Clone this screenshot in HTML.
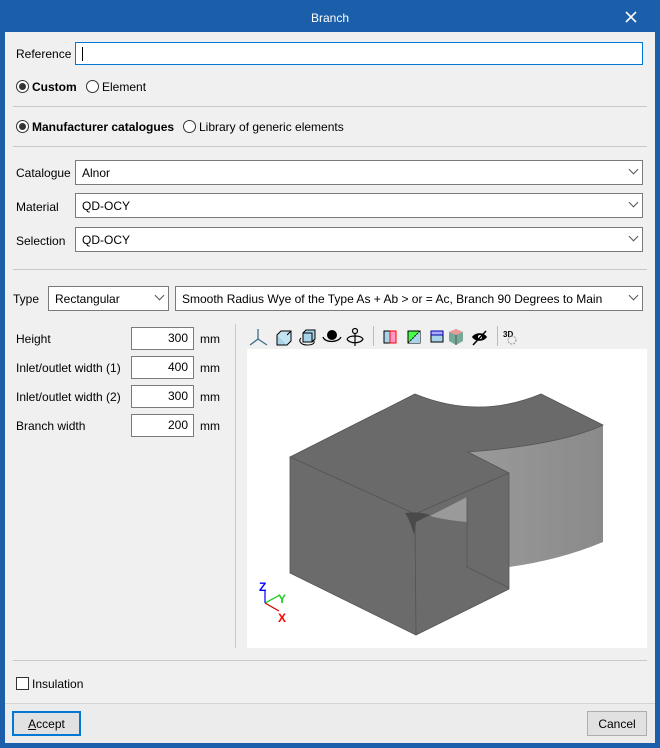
<!DOCTYPE html>
<html><head><style>
*{box-sizing:border-box;margin:0;padding:0}
body{width:660px;height:748px;background:#1b5ea9;font-family:"Liberation Sans",sans-serif;font-size:12px;color:#000;position:relative;overflow:hidden}
.a{position:absolute}
#c{left:5px;top:32px;width:650px;height:711px;background:#f0f0f0}
.t{position:absolute;white-space:nowrap;line-height:14px}
.inp{position:absolute;background:#fff;border:1px solid #7a7a7a}
.sep{position:absolute;height:1px;background:#c8c8c8;left:13px;width:634px}
.rad{position:absolute;width:13px;height:13px;border:1px solid #333;border-radius:50%;background:#fff}
.rad.on::after{content:"";position:absolute;left:2px;top:2px;width:7px;height:7px;border-radius:50%;background:#333}
.chev{position:absolute;right:5px;top:5px;width:7px;height:7px;border-right:1px solid #555;border-bottom:1px solid #555;transform:rotate(45deg)}
.num{text-align:right;padding-right:5px;line-height:21px}
</style></head><body>
<div class="t" style="left:0;width:660px;top:11px;text-align:center;color:#fff;font-size:12px">Branch</div>
<svg class="a" style="left:625px;top:11px" width="12" height="12"><path d="M1 1L11 11M11 1L1 11" stroke="#fff" stroke-width="1.6"/></svg>
<div id="c" class="a"></div>

<div class="t" style="left:16px;top:47px">Reference</div>
<div class="inp" style="left:75px;top:42px;width:568px;height:23px;border:1px solid #0078d7"><div class="a" style="left:6px;top:4px;width:1px;height:14px;background:#000"></div></div>

<div class="rad on" style="left:16px;top:80px"></div><div class="t" style="left:32px;top:80px;font-weight:bold">Custom</div>
<div class="rad" style="left:86px;top:80px"></div><div class="t" style="left:102px;top:80px">Element</div>
<div class="sep" style="top:106px"></div>
<div class="rad on" style="left:16px;top:120px"></div><div class="t" style="left:32px;top:120px;font-weight:bold">Manufacturer catalogues</div>
<div class="rad" style="left:183px;top:120px"></div><div class="t" style="left:199px;top:120px">Library of generic elements</div>
<div class="sep" style="top:146px"></div>

<div class="t" style="left:16px;top:166px">Catalogue</div>
<div class="inp" style="left:75px;top:160px;width:568px;height:25px"><div class="t" style="left:6px;top:5px">Alnor</div><div class="chev"></div></div>
<div class="t" style="left:16px;top:200px">Material</div>
<div class="inp" style="left:75px;top:193px;width:568px;height:25px"><div class="t" style="left:6px;top:5px">QD-OCY</div><div class="chev"></div></div>
<div class="t" style="left:16px;top:234px">Selection</div>
<div class="inp" style="left:75px;top:227px;width:568px;height:25px"><div class="t" style="left:6px;top:5px">QD-OCY</div><div class="chev"></div></div>
<div class="sep" style="top:269px"></div>

<div class="t" style="left:13px;top:292px">Type</div>
<div class="inp" style="left:48px;top:286px;width:121px;height:25px"><div class="t" style="left:6px;top:5px">Rectangular</div><div class="chev"></div></div>
<div class="inp" style="left:175px;top:286px;width:468px;height:25px"><div class="t" style="left:6px;top:5px">Smooth Radius Wye of the Type As + Ab &gt; or = Ac, Branch 90 Degrees to Main</div><div class="chev"></div></div>

<div class="t" style="left:16px;top:332px">Height</div>
<div class="inp num" style="left:131px;top:327px;width:63px;height:23px">300</div><div class="t" style="left:200px;top:332px">mm</div>
<div class="t" style="left:16px;top:361px">Inlet/outlet width (1)</div>
<div class="inp num" style="left:131px;top:356px;width:63px;height:23px">400</div><div class="t" style="left:200px;top:361px">mm</div>
<div class="t" style="left:16px;top:390px">Inlet/outlet width (2)</div>
<div class="inp num" style="left:131px;top:385px;width:63px;height:23px">300</div><div class="t" style="left:200px;top:390px">mm</div>
<div class="t" style="left:16px;top:419px">Branch width</div>
<div class="inp num" style="left:131px;top:414px;width:63px;height:23px">200</div><div class="t" style="left:200px;top:419px">mm</div>

<div class="a" style="left:235px;top:324px;width:1px;height:324px;background:#c8c8c8"></div>

<svg class="a" style="left:245px;top:324px" width="280" height="25">
<g stroke="#3d6f8a" stroke-width="1.3" fill="none"><path d="M13 5V15L5 21M13 15L22 21"/></g>
<g stroke="#000" fill="#a8d4ea"><path d="M32 11h10v10h-10z"/><path d="M32 11l4-4h10v10l-4 4M42 11l4-4" fill="#c5e4f2"/></g>
<g stroke="#000" fill="#a8d4ea"><path d="M58 9h9v9h-9z M58 9l3-3h9v9l-3 3"/><path d="M56 14c-3 3 0 7 6 7s9-2 6-5" fill="none"/></g>
<g><circle cx="87" cy="11" r="5" fill="#000"/><path d="M78 13c2 6 15 6 18 0" stroke="#000" fill="none" stroke-width="1.3"/></g>
<g stroke="#000" fill="none" stroke-width="1.2"><circle cx="110" cy="7" r="2.5"/><path d="M110 10v12M102 15c2 5 14 5 16 0c-2-4-14-4-16 0"/></g>
<rect x="128" y="2" width="1" height="20" fill="#bbb"/>
<g><rect x="139" y="7" width="12" height="12" fill="#a8d4ea" stroke="#000"/><rect x="145" y="7" width="6" height="12" fill="#f9c" stroke="red"/></g>
<g><rect x="163" y="7" width="12" height="12" fill="#4f4" stroke="#000"/><path d="M163 19L175 7V19z" fill="#a8d4ea"/><path d="M163 19L175 7" stroke="#000" stroke-dasharray="2 1"/></g>
<g><rect x="186" y="7" width="12" height="11" fill="#a8d4ea" stroke="#000"/><rect x="186" y="7" width="12" height="4" fill="#aaf" stroke="#00a"/></g>
<g><path d="M211 5l7 3v9l-7 4-7-4V8z" fill="#7a9"/><path d="M204 8l7 3 7-3-7-3z" fill="#e99"/><path d="M211 11v10" stroke="#555"/></g>
<g><path d="M227 13c3-5 12-5 15 0c-3 5-12 5-15 0z" fill="#000"/><circle cx="235" cy="13" r="2" fill="#fff"/><path d="M228 21l13-14" stroke="#000" stroke-width="1.5"/></g>
<rect x="252" y="2" width="1" height="20" fill="#bbb"/>
<text x="258" y="13" font-family="Liberation Sans" font-size="8" font-weight="bold">3D</text>
<circle cx="267" cy="16" r="4" fill="none" stroke="#999" stroke-dasharray="2 1"/>
</svg>

<div class="a" style="left:247px;top:349px;width:400px;height:299px;background:#fff"></div>
<svg class="a" style="left:247px;top:349px" width="400" height="299">
<defs><linearGradient id="g" x1="0" x2="1"><stop offset="0" stop-color="#9a9a9a"/><stop offset="1" stop-color="#8a8a8a"/></linearGradient></defs>
<g transform="translate(-247,-349)">
<path d="M603 425L603 542Q560 560 509 567L509 473L468 452Q560 445 603 425z" fill="url(#g)"/>
<path d="M290 457L415 394Q478 420 541 394L603 425Q560 445 468 452L509 473L415 514z" fill="#6a6a6a" stroke="#555" stroke-width="0.8"/>
<path d="M290 457L415 514L416 635L290 573z" fill="#6b6b6b" stroke="#555" stroke-width="0.8"/>
<path d="M415 514L509 473L509 589L416 635z" fill="#6b6b6b" stroke="#555" stroke-width="0.8"/>
<path d="M430 516L467 497L467 522Q445 520 430 516z" fill="#9a9a9a"/>
<path d="M467 497V567L509 588" fill="none" stroke="#555" stroke-width="0.8"/>
<path d="M405 513Q418 511 430 515L416 522L414 535Q410 520 405 513z" fill="#4a4a4a"/>
<g stroke-width="1.2" fill="none"><path d="M265 603V591" stroke="#00f"/><path d="M265 603L280 595" stroke="#0c0"/><path d="M265 603L279 611" stroke="#c00"/></g>
<text x="259" y="591" font-family="Liberation Sans" font-size="12" font-weight="bold" fill="#00f">Z</text>
<text x="278" y="603" font-family="Liberation Sans" font-size="12" font-weight="bold" fill="#2c2">Y</text>
<text x="278" y="622" font-family="Liberation Sans" font-size="12" font-weight="bold" fill="#f00">X</text>
</g></svg>

<div class="sep" style="top:660px"></div>
<div class="a" style="left:16px;top:677px;width:13px;height:13px;border:1px solid #333;background:#fff"></div>
<div class="t" style="left:32px;top:677px">Insulation</div>

<div class="a" style="left:5px;top:703px;width:650px;height:40px;background:#ececec;border-top:1px solid #d4d4d4"></div>
<div class="a" style="left:12px;top:711px;width:69px;height:25px;border:2px solid #0078d7;background:#e1e1e1"></div>
<div class="t" style="left:12px;top:717px;width:69px;text-align:center"><u>A</u>ccept</div>
<div class="a" style="left:587px;top:711px;width:60px;height:25px;border:1px solid #adadad;background:#e1e1e1"></div>
<div class="t" style="left:587px;top:717px;width:60px;text-align:center">Cancel</div>
</body></html>
